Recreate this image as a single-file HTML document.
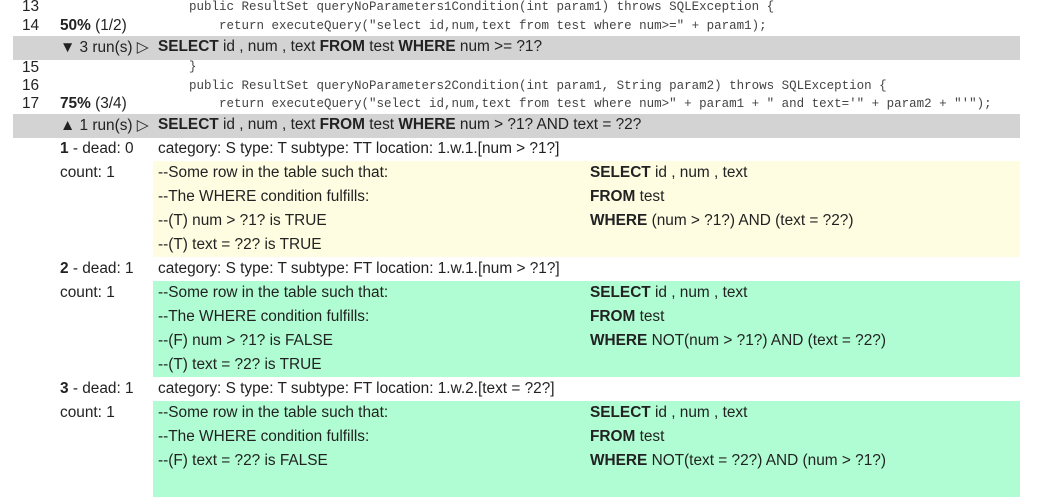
<!DOCTYPE html><html><head><style>
body{margin:0;width:1037px;height:464px;overflow:hidden;background:#fff;font-family:"Liberation Sans",sans-serif;font-size:15.4px;color:#222;position:relative}
div{position:absolute;white-space:pre}
.ln{left:22px}
.cv{left:60px}
.code{left:189px;font-family:"Liberation Mono",monospace;font-size:12.5px;color:#444}
.bar{left:13px;width:1007px;height:24px;background:#d3d3d3}
.box{left:153px;width:867px;height:96px}
.l{left:158px}.r{left:590px}
b{font-weight:bold}
</style></head><body>
<div class="ln" style="top:-2px">13</div><div class="code" style="top:0px">public ResultSet queryNoParameters1Condition(int param1) throws SQLException {</div>
<div class="ln" style="top:17px">14</div><div class="cv" style="top:17px"><b>50%</b> (1/2)</div><div class="code" style="top:19px">    return executeQuery("select id,num,text from test where num&gt;=" + param1);</div>
<div class="bar" style="top:36px"></div>
<div class="cv" style="top:38px">▼ 3 run(s) ▷</div><div class="l" style="top:38px"><b>SELECT</b> id , num , text <b>FROM</b> test <b>WHERE</b> num &gt;= ?1?</div>
<div class="ln" style="top:59px">15</div><div class="code" style="top:60px">}</div>
<div class="ln" style="top:77px">16</div><div class="code" style="top:79px">public ResultSet queryNoParameters2Condition(int param1, String param2) throws SQLException {</div>
<div class="ln" style="top:95px">17</div><div class="cv" style="top:95px"><b>75%</b> (3/4)</div><div class="code" style="top:97px">    return executeQuery("select id,num,text from test where num&gt;" + param1 + " and text='" + param2 + "'");</div>
<div class="bar" style="top:114px"></div>
<div class="cv" style="top:116px">▲ 1 run(s) ▷</div><div class="l" style="top:116px"><b>SELECT</b> id , num , text <b>FROM</b> test <b>WHERE</b> num &gt; ?1? AND text = ?2?</div>

<div class="cv" style="top:140px"><b>1</b> - dead: 0</div><div class="l" style="top:140px">category: S type: T subtype: TT location: 1.w.1.[num &gt; ?1?]</div>
<div class="box" style="top:161px;background:#fefde2"></div>
<div class="cv" style="top:164px">count: 1</div>
<div class="l" style="top:164px">--Some row in the table such that:</div><div class="r" style="top:164px"><b>SELECT</b> id , num , text</div>
<div class="l" style="top:188px">--The WHERE condition fulfills:</div><div class="r" style="top:188px"><b>FROM</b> test</div>
<div class="l" style="top:212px">--(T) num &gt; ?1? is TRUE</div><div class="r" style="top:212px"><b>WHERE</b> (num &gt; ?1?) AND (text = ?2?)</div>
<div class="l" style="top:236px">--(T) text = ?2? is TRUE</div>

<div class="cv" style="top:260px"><b>2</b> - dead: 1</div><div class="l" style="top:260px">category: S type: T subtype: FT location: 1.w.1.[num &gt; ?1?]</div>
<div class="box" style="top:281px;background:#b0fdd3"></div>
<div class="cv" style="top:284px">count: 1</div>
<div class="l" style="top:284px">--Some row in the table such that:</div><div class="r" style="top:284px"><b>SELECT</b> id , num , text</div>
<div class="l" style="top:308px">--The WHERE condition fulfills:</div><div class="r" style="top:308px"><b>FROM</b> test</div>
<div class="l" style="top:332px">--(F) num &gt; ?1? is FALSE</div><div class="r" style="top:332px"><b>WHERE</b> NOT(num &gt; ?1?) AND (text = ?2?)</div>
<div class="l" style="top:356px">--(T) text = ?2? is TRUE</div>

<div class="cv" style="top:380px"><b>3</b> - dead: 1</div><div class="l" style="top:380px">category: S type: T subtype: FT location: 1.w.2.[text = ?2?]</div>
<div class="box" style="top:401px;background:#b0fdd3"></div>
<div class="cv" style="top:404px">count: 1</div>
<div class="l" style="top:404px">--Some row in the table such that:</div><div class="r" style="top:404px"><b>SELECT</b> id , num , text</div>
<div class="l" style="top:428px">--The WHERE condition fulfills:</div><div class="r" style="top:428px"><b>FROM</b> test</div>
<div class="l" style="top:452px">--(F) text = ?2? is FALSE</div><div class="r" style="top:452px"><b>WHERE</b> NOT(text = ?2?) AND (num &gt; ?1?)</div>
</body></html>
